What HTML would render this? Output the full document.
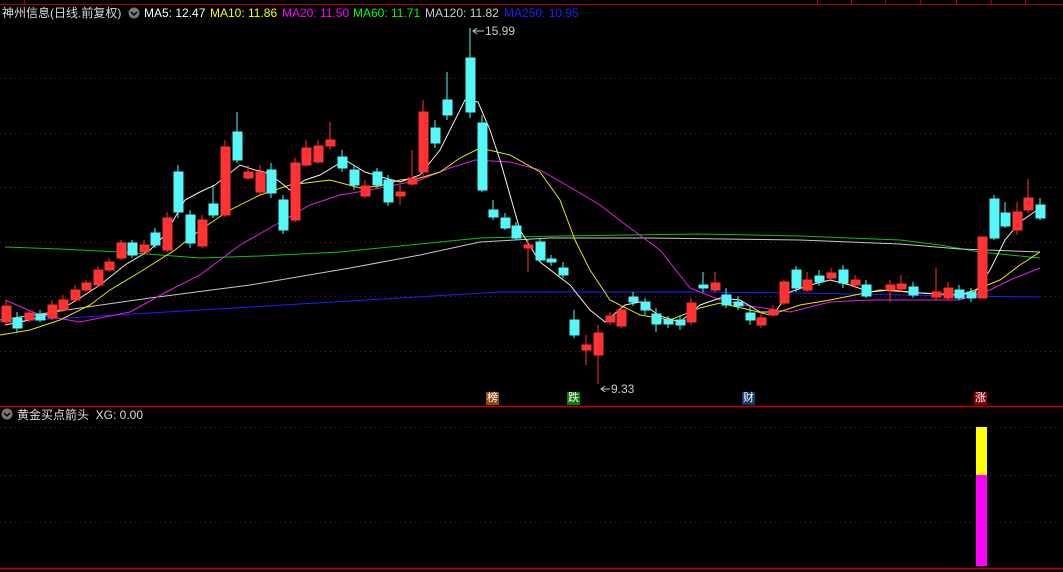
<!DOCTYPE html>
<html><head><meta charset="utf-8"><style>
html,body{margin:0;padding:0;background:#000;}
body{width:1063px;height:572px;overflow:hidden;position:relative;font-family:"Liberation Sans","Noto Sans CJK SC",sans-serif;}
.t{position:absolute;font-size:12px;white-space:nowrap;line-height:14px;}
.tag{position:absolute;top:392px;width:13px;height:13px;font-size:11px;line-height:13px;color:#fff;text-align:center;}
</style></head><body>
<svg width="1063" height="572" style="position:absolute;left:0;top:0">
<g stroke="#a00" stroke-width="1" fill="none">
<line x1="0" y1="4.5" x2="1063" y2="4.5"/>
<line x1="24.5" y1="0" x2="24.5" y2="4"/><line x1="817.5" y1="0" x2="817.5" y2="4"/><line x1="851.5" y1="0" x2="851.5" y2="4"/><line x1="885.5" y1="0" x2="885.5" y2="4"/><line x1="920.5" y1="0" x2="920.5" y2="4"/><line x1="956.5" y1="0" x2="956.5" y2="4"/><line x1="991.5" y1="0" x2="991.5" y2="4"/><line x1="1025.5" y1="0" x2="1025.5" y2="4"/>
</g>
<line x1="0" y1="406.5" x2="1063" y2="406.5" stroke="#c00" stroke-width="1.5"/>
<line x1="0" y1="568.5" x2="1063" y2="568.5" stroke="#c00" stroke-width="1.5"/>
<g stroke="#7a1010" stroke-width="1" stroke-dasharray="1,4">
<line x1="0" y1="78.5" x2="1063" y2="78.5"/><line x1="0" y1="133.5" x2="1063" y2="133.5"/><line x1="0" y1="187.5" x2="1063" y2="187.5"/><line x1="0" y1="242.5" x2="1063" y2="242.5"/><line x1="0" y1="296.5" x2="1063" y2="296.5"/><line x1="0" y1="351.5" x2="1063" y2="351.5"/>
<line x1="0" y1="427.5" x2="1063" y2="427.5"/><line x1="0" y1="475.5" x2="1063" y2="475.5"/><line x1="0" y1="522.5" x2="1063" y2="522.5"/>
</g>
<g fill="none" stroke-width="1">
<polyline stroke="#10c010" points="5,247 60,249 120,252 200,258 260,256 340,252 420,244 480,238 560,236 700,234 800,236 900,240 940,245 980,252 1040,258"/>
<polyline stroke="#c8c8c8" points="0,320 80,308 150,298 250,285 350,268 420,255 480,242 550,238 650,238 800,240 900,244 960,249 1040,252"/>
<polyline stroke="#2020ff" points="0,322 100,316 200,310 300,304 400,298 500,292 600,292 700,292 800,293 900,295 960,296 1040,297"/>
<polyline stroke="#e020e0" points="5,300 40,315 80,322 130,312 170,290 200,275 240,245 270,228 310,205 340,195 370,190 420,180 450,168 475,160 510,162 540,170 575,190 600,205 630,228 660,250 690,288 720,300 750,306 790,312 830,302 870,300 920,300 960,300 990,290 1010,280 1040,268"/>
<polyline stroke="#e8e800" points="0,335 30,330 60,320 90,305 110,290 140,272 175,250 200,230 230,210 260,195 290,185 330,180 360,188 380,186 400,180 420,178 440,172 460,158 480,148 510,155 540,172 560,200 575,240 590,270 610,300 640,315 670,320 700,308 720,303 750,310 770,315 800,305 830,300 880,290 920,293 960,295 975,290 1000,280 1020,265 1040,252"/>
<polyline stroke="#f0f0f0" points="5,325 30,320 60,310 80,298 100,285 125,265 150,250 165,235 185,200 200,192 215,185 240,165 255,170 265,172 280,182 290,190 305,180 320,175 345,160 365,172 385,178 400,182 420,175 440,150 450,130 465,100 478,102 490,130 500,160 510,195 520,230 540,262 570,285 590,310 605,322 625,305 640,302 660,316 680,322 700,305 720,298 740,300 760,312 775,312 790,292 810,285 830,280 850,285 870,292 890,290 920,293 960,295 975,292 990,270 1005,240 1020,222 1040,208"/>
</g>
<g stroke-width="1">
<g fill="#ff3333" stroke="#ff3333">
<line x1="6" y1="300" x2="6" y2="326"/><rect x="2" y="306" width="9" height="16"/>
<line x1="29" y1="310" x2="29" y2="322"/><rect x="25" y="313" width="9" height="7"/>
<line x1="52" y1="300" x2="52" y2="320"/><rect x="48" y="305" width="9" height="13"/>
<line x1="63" y1="295" x2="63" y2="312"/><rect x="59" y="300" width="9" height="10"/>
<line x1="75" y1="285" x2="75" y2="302"/><rect x="71" y="290" width="9" height="10"/>
<line x1="86" y1="280" x2="86" y2="292"/><rect x="82" y="283" width="9" height="7"/>
<line x1="98" y1="266" x2="98" y2="287"/><rect x="94" y="270" width="9" height="15"/>
<line x1="109" y1="258" x2="109" y2="272"/><rect x="105" y="262" width="9" height="8"/>
<line x1="121" y1="240" x2="121" y2="260"/><rect x="117" y="243" width="9" height="15"/>
<line x1="144" y1="240" x2="144" y2="254"/><rect x="140" y="245" width="9" height="7"/>
<line x1="167" y1="212" x2="167" y2="252"/><rect x="163" y="218" width="9" height="32"/>
<line x1="202" y1="215" x2="202" y2="248"/><rect x="198" y="220" width="9" height="26"/>
<line x1="225" y1="140" x2="225" y2="217"/><rect x="221" y="147" width="9" height="68"/>
<line x1="248" y1="165" x2="248" y2="180"/><rect x="244" y="172" width="9" height="6"/>
<line x1="260" y1="165" x2="260" y2="194"/><rect x="256" y="172" width="9" height="20"/>
<line x1="295" y1="158" x2="295" y2="222"/><rect x="291" y="163" width="9" height="57"/>
<line x1="306" y1="140" x2="306" y2="167"/><rect x="302" y="148" width="9" height="17"/>
<line x1="318" y1="140" x2="318" y2="164"/><rect x="314" y="146" width="9" height="16"/>
<line x1="330" y1="122" x2="330" y2="150"/><rect x="326" y="140" width="9" height="6"/>
<line x1="365" y1="180" x2="365" y2="198"/><rect x="361" y="186" width="9" height="10"/>
<line x1="400" y1="185" x2="400" y2="205"/><rect x="396" y="192" width="9" height="4"/>
<line x1="412" y1="150" x2="412" y2="186"/><rect x="408" y="178" width="9" height="6"/>
<line x1="423" y1="100" x2="423" y2="178"/><rect x="419" y="112" width="9" height="60"/>
<line x1="528" y1="240" x2="528" y2="272"/><rect x="524" y="245" width="9" height="3"/>
<line x1="586" y1="335" x2="586" y2="365"/><rect x="582" y="345" width="9" height="5"/>
<line x1="598" y1="325" x2="598" y2="384"/><rect x="594" y="333" width="9" height="22"/>
<line x1="610" y1="312" x2="610" y2="325"/><rect x="606" y="316" width="9" height="6"/>
<line x1="621" y1="305" x2="621" y2="328"/><rect x="617" y="310" width="9" height="16"/>
<line x1="691" y1="298" x2="691" y2="325"/><rect x="687" y="303" width="9" height="19"/>
<line x1="715" y1="272" x2="715" y2="292"/><rect x="711" y="283" width="9" height="7"/>
<line x1="761" y1="312" x2="761" y2="328"/><rect x="757" y="318" width="9" height="7"/>
<line x1="773" y1="305" x2="773" y2="317"/><rect x="769" y="310" width="9" height="5"/>
<line x1="784" y1="280" x2="784" y2="305"/><rect x="780" y="282" width="9" height="21"/>
<line x1="807" y1="272" x2="807" y2="292"/><rect x="803" y="280" width="9" height="10"/>
<line x1="831" y1="268" x2="831" y2="280"/><rect x="827" y="273" width="9" height="5"/>
<line x1="855" y1="275" x2="855" y2="288"/><rect x="851" y="280" width="9" height="5"/>
<line x1="890" y1="280" x2="890" y2="302"/><rect x="886" y="285" width="9" height="5"/>
<line x1="901" y1="275" x2="901" y2="292"/><rect x="897" y="284" width="9" height="5"/>
<line x1="936" y1="268" x2="936" y2="300"/><rect x="932" y="292" width="9" height="5"/>
<line x1="948" y1="282" x2="948" y2="300"/><rect x="944" y="288" width="9" height="10"/>
<line x1="982" y1="237" x2="982" y2="298"/><rect x="978" y="237" width="9" height="61"/>
<line x1="1017" y1="202" x2="1017" y2="235"/><rect x="1013" y="212" width="9" height="18"/>
<line x1="1028" y1="179" x2="1028" y2="213"/><rect x="1024" y="198" width="9" height="12"/>
</g>
<g fill="#54f8f8" stroke="#54f8f8">
<line x1="17" y1="312" x2="17" y2="332"/><rect x="13" y="318" width="9" height="10"/>
<line x1="40" y1="310" x2="40" y2="322"/><rect x="36" y="314" width="9" height="6"/>
<line x1="132" y1="240" x2="132" y2="258"/><rect x="128" y="243" width="9" height="12"/>
<line x1="155" y1="228" x2="155" y2="248"/><rect x="151" y="233" width="9" height="12"/>
<line x1="178" y1="165" x2="178" y2="218"/><rect x="174" y="172" width="9" height="40"/>
<line x1="190" y1="210" x2="190" y2="248"/><rect x="186" y="215" width="9" height="28"/>
<line x1="213" y1="185" x2="213" y2="218"/><rect x="209" y="204" width="9" height="11"/>
<line x1="237" y1="112" x2="237" y2="163"/><rect x="233" y="132" width="9" height="28"/>
<line x1="271" y1="163" x2="271" y2="198"/><rect x="267" y="170" width="9" height="23"/>
<line x1="283" y1="195" x2="283" y2="234"/><rect x="279" y="200" width="9" height="30"/>
<line x1="342" y1="150" x2="342" y2="172"/><rect x="338" y="157" width="9" height="11"/>
<line x1="354" y1="165" x2="354" y2="190"/><rect x="350" y="170" width="9" height="15"/>
<line x1="377" y1="168" x2="377" y2="188"/><rect x="373" y="172" width="9" height="13"/>
<line x1="388" y1="175" x2="388" y2="206"/><rect x="384" y="180" width="9" height="22"/>
<line x1="435" y1="120" x2="435" y2="148"/><rect x="431" y="128" width="9" height="15"/>
<line x1="447" y1="72" x2="447" y2="120"/><rect x="443" y="100" width="9" height="15"/>
<line x1="470" y1="28" x2="470" y2="118"/><rect x="466" y="58" width="9" height="54"/>
<line x1="482" y1="115" x2="482" y2="192"/><rect x="478" y="123" width="9" height="67"/>
<line x1="493" y1="200" x2="493" y2="220"/><rect x="489" y="210" width="9" height="7"/>
<line x1="505" y1="213" x2="505" y2="230"/><rect x="501" y="218" width="9" height="10"/>
<line x1="516" y1="222" x2="516" y2="240"/><rect x="512" y="226" width="9" height="12"/>
<line x1="540" y1="238" x2="540" y2="262"/><rect x="536" y="242" width="9" height="18"/>
<line x1="551" y1="255" x2="551" y2="266"/><rect x="547" y="259" width="9" height="3"/>
<line x1="563" y1="262" x2="563" y2="278"/><rect x="559" y="268" width="9" height="7"/>
<line x1="574" y1="310" x2="574" y2="338"/><rect x="570" y="320" width="9" height="15"/>
<line x1="633" y1="292" x2="633" y2="306"/><rect x="629" y="297" width="9" height="5"/>
<line x1="645" y1="298" x2="645" y2="315"/><rect x="641" y="302" width="9" height="8"/>
<line x1="656" y1="308" x2="656" y2="332"/><rect x="652" y="314" width="9" height="10"/>
<line x1="668" y1="316" x2="668" y2="328"/><rect x="664" y="320" width="9" height="4"/>
<line x1="680" y1="316" x2="680" y2="330"/><rect x="676" y="320" width="9" height="5"/>
<line x1="703" y1="272" x2="703" y2="292"/><rect x="699" y="285" width="9" height="3"/>
<line x1="726" y1="288" x2="726" y2="308"/><rect x="722" y="295" width="9" height="10"/>
<line x1="738" y1="296" x2="738" y2="310"/><rect x="734" y="302" width="9" height="4"/>
<line x1="750" y1="306" x2="750" y2="325"/><rect x="746" y="313" width="9" height="7"/>
<line x1="796" y1="266" x2="796" y2="292"/><rect x="792" y="270" width="9" height="18"/>
<line x1="819" y1="270" x2="819" y2="286"/><rect x="815" y="276" width="9" height="6"/>
<line x1="843" y1="265" x2="843" y2="288"/><rect x="839" y="270" width="9" height="13"/>
<line x1="866" y1="280" x2="866" y2="298"/><rect x="862" y="285" width="9" height="11"/>
<line x1="913" y1="282" x2="913" y2="298"/><rect x="909" y="287" width="9" height="8"/>
<line x1="959" y1="285" x2="959" y2="300"/><rect x="955" y="290" width="9" height="8"/>
<line x1="971" y1="288" x2="971" y2="302"/><rect x="967" y="292" width="9" height="6"/>
<line x1="994" y1="195" x2="994" y2="240"/><rect x="990" y="199" width="9" height="39"/>
<line x1="1005" y1="202" x2="1005" y2="228"/><rect x="1001" y="213" width="9" height="13"/>
<line x1="1040" y1="198" x2="1040" y2="220"/><rect x="1036" y="205" width="9" height="13"/>
</g>
</g>
<g stroke="#c8c8c8" fill="none" stroke-width="1">
<line x1="473" y1="31" x2="484" y2="31"/><polyline points="477,28 473,31 477,34"/>
<line x1="601" y1="389" x2="610" y2="389"/><polyline points="605,386 601,389 605,392"/>
</g>
<rect x="976" y="427" width="11" height="48" fill="#ffff00"/>
<rect x="976" y="475" width="11" height="91" fill="#ff00ff"/>
<circle cx="134" cy="13" r="5.5" fill="#777"/>
<polyline points="131,12 134,15 137,12" stroke="#000" stroke-width="1.5" fill="none"/>
<circle cx="7" cy="414" r="5.5" fill="#777"/>
<polyline points="4,413 7,416 10,413" stroke="#000" stroke-width="1.5" fill="none"/>
</svg>
<div class="t" style="left:2px;top:6px;color:#ddd">神州信息(日线.前复权)</div>
<div class="t" style="left:144px;top:6px;color:#fff">MA5: 12.47</div>
<div class="t" style="left:210px;top:6px;color:#ffff00">MA10: 11.86</div>
<div class="t" style="left:282px;top:6px;color:#ff00ff">MA20: 11.50</div>
<div class="t" style="left:353px;top:6px;color:#00ff00">MA60: 11.71</div>
<div class="t" style="left:425px;top:6px;color:#ccc">MA120: 11.82</div>
<div class="t" style="left:504px;top:6px;color:#2020ff">MA250: 10.95</div>
<div class="t" style="left:485px;top:24px;color:#ccc">15.99</div>
<div class="t" style="left:611px;top:382px;color:#ccc">9.33</div>
<div class="t" style="left:17px;top:408px;color:#ddd">黄金买点箭头&nbsp; XG: 0.00</div>
<div class="tag" style="left:486px;background:#8b4a0f">榜</div>
<div class="tag" style="left:567px;background:#0a7a0a">跌</div>
<div class="tag" style="left:742px;background:#0d3a6e">财</div>
<div class="tag" style="left:974px;background:#8b0000">涨</div>
</body></html>
